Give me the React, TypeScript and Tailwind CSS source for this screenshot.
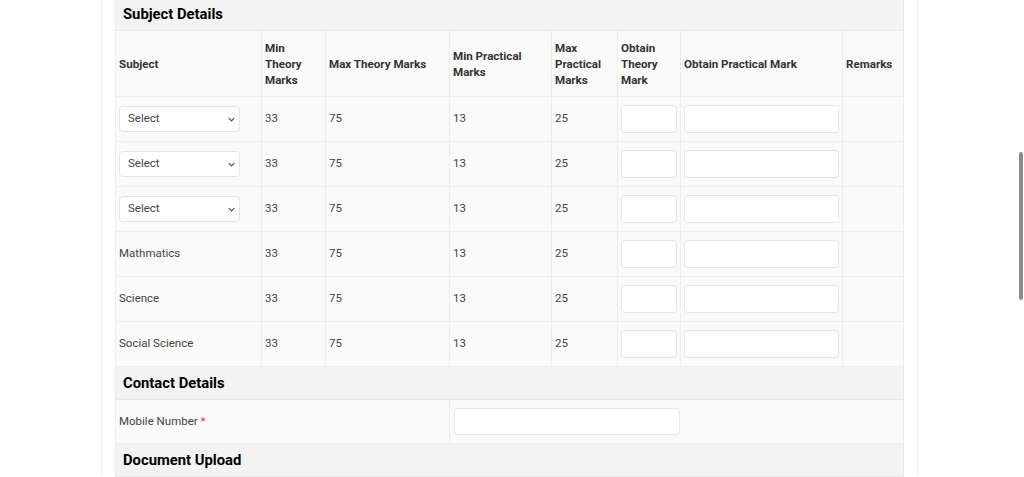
import React from 'react';

const rows = [
  { subject: null },
  { subject: null },
  { subject: null },
  { subject: 'Mathmatics' },
  { subject: 'Science' },
  { subject: 'Social Science' },
];

const SubjectSelect = () => (
  <div className="relative w-[121px]">
    <select className="appearance-none w-full h-[26px] bg-white border border-[#e6e6e6] rounded-[4px] pl-[8px] text-[11.5px] text-[#444] outline-none">
      <option>Select</option>
    </select>
    <svg
      className="absolute right-[4px] top-[9px] w-[9px] h-[9px] pointer-events-none"
      viewBox="0 0 10 10"
      fill="none"
      stroke="#555"
      strokeWidth="1.4"
    >
      <path d="M2 3.5 L5 6.5 L8 3.5" />
    </svg>
  </div>
);

const SectionHeading = ({ title, h = 'h-[33px]' }: { title: string; h?: string }) => (
  <tr>
    <td colSpan={8} className={`${h} bg-[#f3f3f3] border border-[#e8e8e8] px-[7px] text-[14.8px] font-bold text-black`}>
      {title}
    </td>
  </tr>
);

export default function App() {
  const cell = 'border border-[#eeeeee] px-[3px] text-[11.5px] text-[#444]';
  const th = 'border border-[#eeeeee] px-[3px] text-[11.6px] font-bold text-[#333] leading-[16px] text-left';

  return (
    <div className="relative w-[1024px] h-[477px] overflow-hidden bg-white" style={{ fontFamily: 'Roboto, "Liberation Sans", sans-serif' }}>
      <div className="ml-[101px] w-[817px] h-full border-x border-[#ececec] px-[13px]">
        <table className="w-[788px] table-fixed border-collapse -mt-[2px]">
          <colgroup>
            <col className="w-[146px]" />
            <col className="w-[64px]" />
            <col className="w-[124px]" />
            <col className="w-[102px]" />
            <col className="w-[66px]" />
            <col className="w-[63px]" />
            <col className="w-[162px]" />
            <col className="w-[61px]" />
          </colgroup>
          <tbody>
            <SectionHeading title="Subject Details" h="h-[32px]" />
            <tr className="h-[66px] bg-[#fafafa]">
              <th className={th}>Subject</th>
              <th className={th}>Min Theory Marks</th>
              <th className={th}>Max Theory Marks</th>
              <th className={th}>Min Practical Marks</th>
              <th className={th}>Max Practical Marks</th>
              <th className={th}>Obtain Theory Mark</th>
              <th className={th}>Obtain Practical Mark</th>
              <th className={th}>Remarks</th>
            </tr>
            {rows.map((r, i) => (
              <tr key={i} className="h-[45px] bg-[#fafafa]">
                <td className={cell}>{r.subject ? r.subject : <SubjectSelect />}</td>
                <td className={cell}>33</td>
                <td className={cell}>75</td>
                <td className={cell}>13</td>
                <td className={cell}>25</td>
                <td className={cell}>
                  <input className="block w-[56px] h-[28px] bg-white border border-[#e6e6e6] rounded-[4px] outline-none" />
                </td>
                <td className={cell}>
                  <input className="block w-[155px] h-[28px] bg-white border border-[#e6e6e6] rounded-[4px] outline-none" />
                </td>
                <td className={cell}></td>
              </tr>
            ))}
            <SectionHeading title="Contact Details" />
            <tr className="h-[44px] bg-[#fafafa]">
              <td colSpan={3} className={cell}>
                Mobile Number <span className="text-[#e53935]">*</span>
              </td>
              <td colSpan={5} className="border border-[#eeeeee] px-[4px]">
                <input className="block w-[226px] h-[27px] bg-white border border-[#e6e6e6] rounded-[4px] outline-none" />
              </td>
            </tr>
            <SectionHeading title="Document Upload" />
          </tbody>
        </table>
      </div>
      <div className="absolute right-[1px] top-[152px] w-[4px] h-[148px] rounded-full bg-[#8c8c8c]" />
    </div>
  );
}
